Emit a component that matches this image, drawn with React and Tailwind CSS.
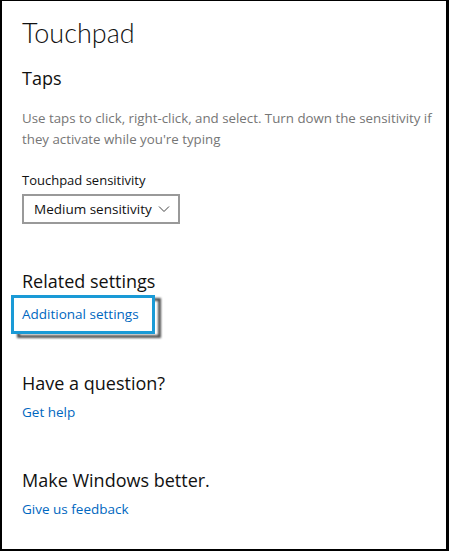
import React from "react";

export default function App() {
  return (
    <div className="w-[449px] h-[551px] bg-black pt-px pl-[2px] pr-[3px] pb-[2px]">
      <div
        className="h-full w-full bg-white pl-[20px] pt-[14px]"
        style={{ fontFamily: '"Open Sans", "Noto Sans", sans-serif' }}
      >
        <h1
          className="text-[27px] font-light leading-[36px] text-[#111]"
          style={{ fontFamily: 'Lato, "Open Sans", sans-serif' }}
        >
          Touchpad
        </h1>

        <h2 className="mt-[15px] text-[18px] leading-[24px] text-[#111]">Taps</h2>

        <p className="mt-[18px] pr-[6px] text-[13.3px] leading-[21px] text-[#767676]">
          Use taps to click, right-click, and select. Turn down the sensitivity if they activate
          while you're typing
        </p>

        <div className="mt-[21px] text-[13px] leading-[18px] text-[#111]">Touchpad sensitivity</div>
        <div className="mt-[5px] flex h-[30px] w-[158px] items-center justify-between border-2 border-[#999] pl-[10px] pr-[8px] text-[13.5px] text-[#111]">
          <span>Medium sensitivity</span>
          <svg width="12" height="8" viewBox="0 0 12 8" fill="none" stroke="#444" strokeWidth="1">
            <path d="M1 1.5 L6 6.5 L11 1.5" />
          </svg>
        </div>

        <h2 className="mt-[45px] text-[18px] leading-[24px] text-[#111]">Related settings</h2>
        <div className="relative mt-[2px] -ml-[11px] w-[144px]">
          <div className="absolute left-[6px] top-[3px] h-[40px] w-[144px] border-[3px] border-[#505050] blur-[1px]" />
          <div className="relative h-[39px] border-[3px] border-[#1a9ad6] bg-white pl-[8px] pt-[6px] text-[13.5px] leading-[21px] text-[#0067c0]">
            Additional settings
          </div>
        </div>

        <h2 className="mt-[37px] text-[18px] leading-[24px] text-[#111]">Have a question?</h2>
        <div className="mt-[7px] text-[13.5px] leading-[20px] text-[#0067c0]">Get help</div>

        <h2 className="mt-[46px] text-[18px] leading-[24px] text-[#111]">Make Windows better.</h2>
        <div className="mt-[7px] text-[13.5px] leading-[20px] text-[#0067c0]">Give us feedback</div>
      </div>
    </div>
  );
}
